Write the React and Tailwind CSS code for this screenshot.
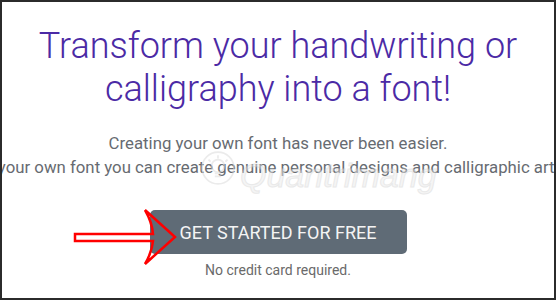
import React from "react";

const Arrow = () => (
  <svg
    className="absolute left-[70px] top-[205px]"
    width="110"
    height="62"
    viewBox="70 205 110 62"
  >
    <path
      d="M73 232 L151 232 Q150 220 143 208 L173 235 L143 262 Q150 250 151 239 L73 239 Z"
      fill="none"
      stroke="#ff0000"
      strokeWidth="2.5"
      strokeLinejoin="miter"
    />
  </svg>
);

const Watermark = () => (
  <div className="pointer-events-none absolute left-[198px] top-[142px] flex items-center gap-1 opacity-50">
    <svg width="36" height="36" viewBox="0 0 34 34" fill="none" stroke="#d8d8d8" strokeWidth="1.6">
      <circle cx="17" cy="17" r="15" />
      <circle cx="17" cy="15" r="6" />
      <path d="M14 22 h6 M14 25 h6 M17 5 v3 M8 9 l2 2 M26 9 l-2 2" />
    </svg>
    <span
      className="mt-[14px] text-[34px] italic leading-none text-[#ececec]"
      style={{ fontFamily: "'Liberation Sans', sans-serif", WebkitTextStroke: "1px #d4d4d4" }}
    >
      Quantrimang
    </span>
  </div>
);

export default function App() {
  return (
    <div
      className="relative flex h-[300px] w-[556px] flex-col items-center overflow-hidden border-2 border-[#2b2b2b] bg-white"
      style={{ fontFamily: "Roboto, 'Liberation Sans', sans-serif" }}
    >
      <h1 className="pt-[23px] text-center text-[36px] font-light leading-[43px] text-[#4b2aa5]">
        Transform your handwriting or
        <br />
        calligraphy into a font!
      </h1>

      <div className="mt-[20px] flex w-full flex-col text-[16.8px] leading-[24px] text-[#676b71]">
        <p className="whitespace-nowrap text-center">Creating your own font has never been easier.</p>
        <div className="flex w-full justify-start">
          <p className="-ml-[42px] shrink-0 whitespace-nowrap">
            With your own font you can create genuine personal designs and calligraphic artworks.
          </p>
        </div>
      </div>

      <button className="mt-[31px] h-[44px] w-[257px] rounded-[5px] bg-[#5f6b76] text-[18px] text-[#f4f4f4]">
        GET STARTED FOR FREE
      </button>

      <p className="mt-[8px] text-[14px] leading-[16px] text-[#6a6a6a]">No credit card required.</p>

      <Watermark />
      <Arrow />
    </div>
  );
}
